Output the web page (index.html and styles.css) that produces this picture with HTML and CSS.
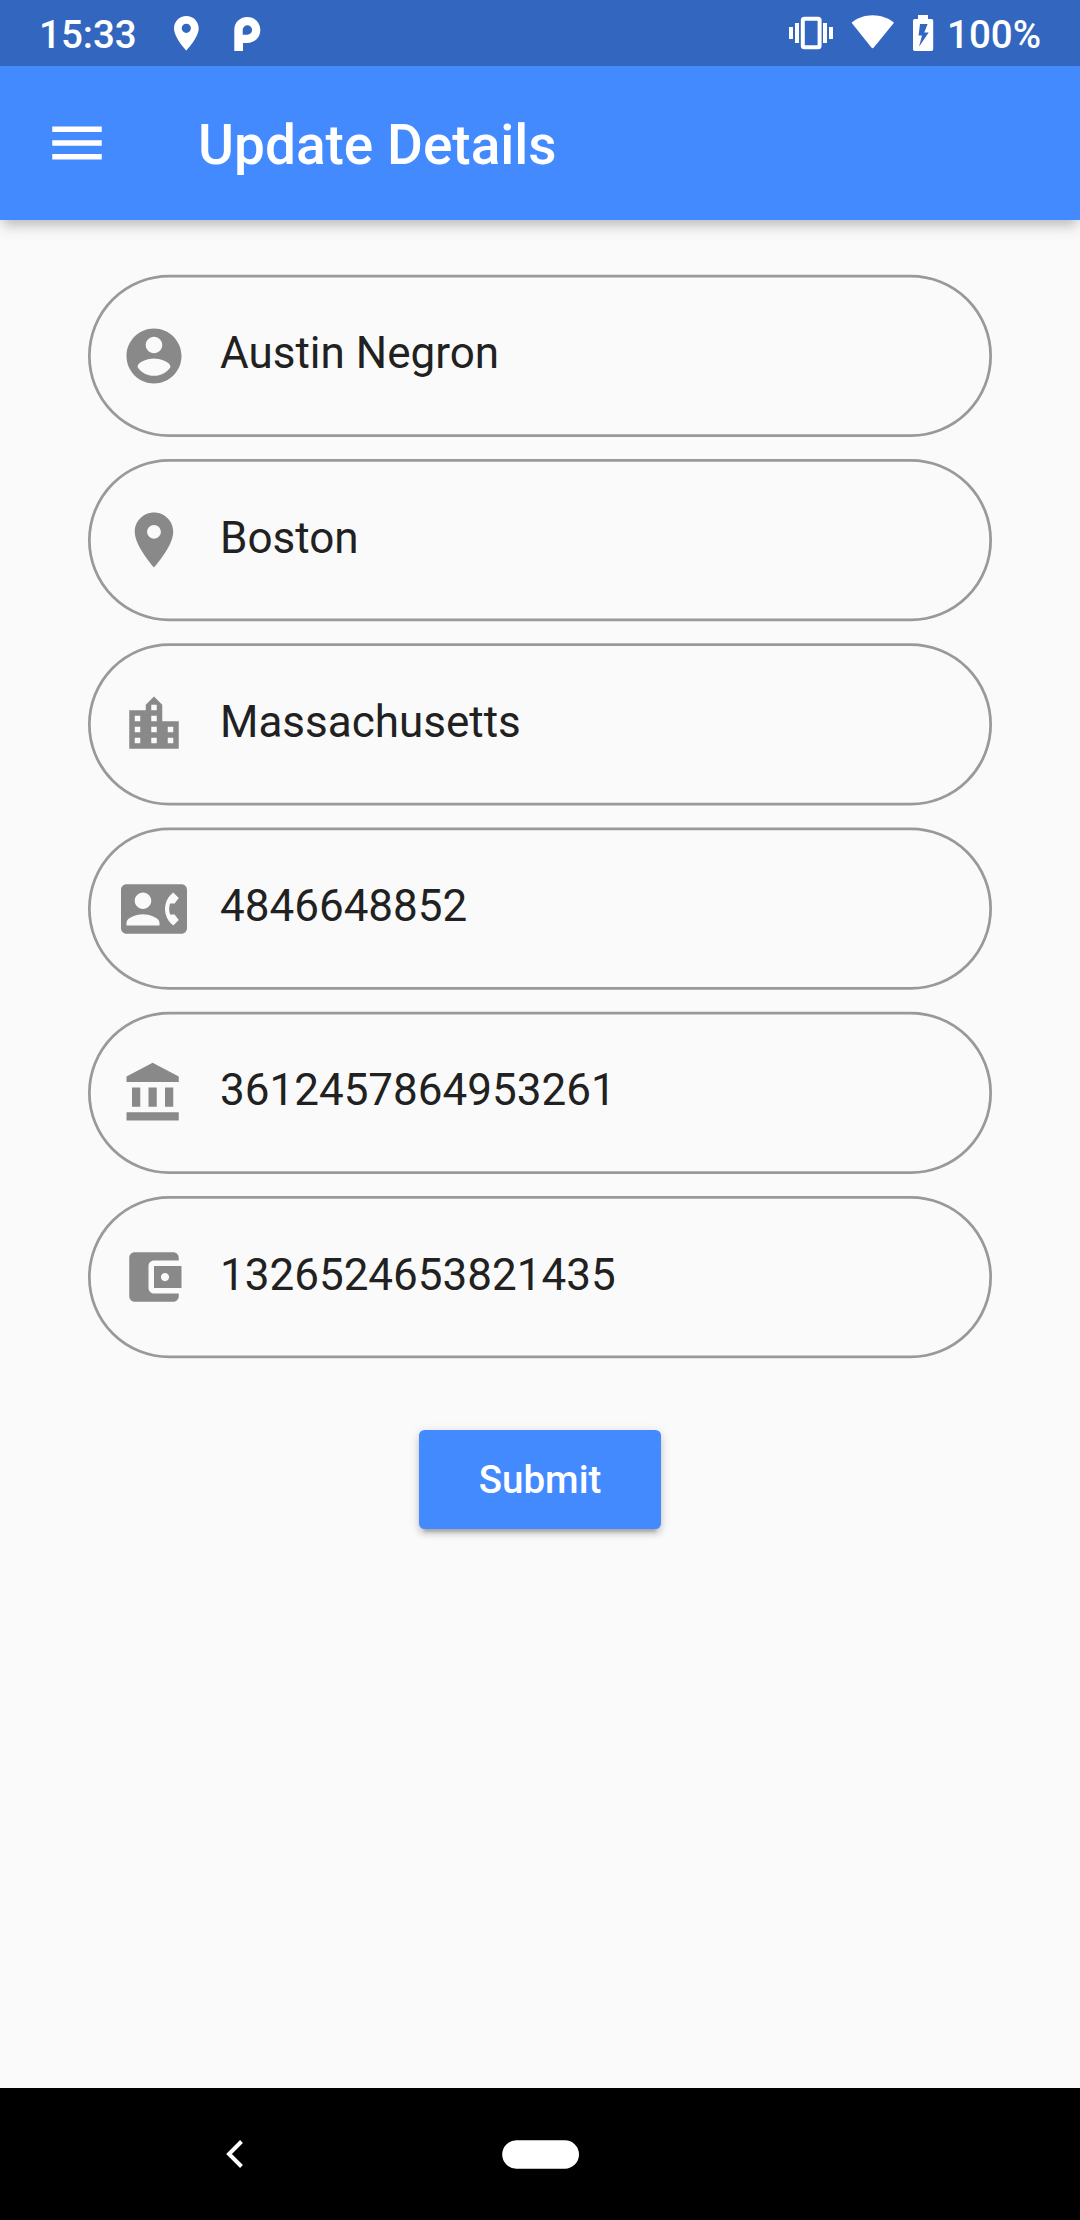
FILE: index.html
```html
<!DOCTYPE html>
<html lang="en">
<head>
<meta charset="utf-8">
<title>Update Details</title>
<link rel="stylesheet" href="styles.css">
</head>
<body>
<div class="screen">
  <header class="top">
    <div class="status">
      <span class="clock">15:33</span>
      <svg class="status-pin" width="26" height="66" viewBox="173 0 26 66"><path fill-rule="evenodd" d="M186.300 16C179.500 16 174 21.500 174 28.200C174 37.500 186.300 50.500 186.300 50.500S198.700 37.500 198.700 28.200C198.700 21.500 193.200 16 186.300 16ZM186.300 23.700a4.600 4.600 0 1 1 0 9.200a4.600 4.600 0 1 1 0-9.200Z"/></svg>
      <svg class="status-p" width="28" height="66" viewBox="233 0 28 66"><path fill-rule="evenodd" d="M234.300 51V30C234.300 22.500 239.700 17 247.200 17C254.800 17 260.300 22.700 260.300 30C260.300 37.500 254.800 43 247.200 43H243V51ZM247.400 25.300a4.700 4.700 0 0 0-4.700 4.700V34.700H247.400a4.700 4.700 0 0 0 0-9.400Z"/></svg>
      <span class="spacer"></span>
      <svg class="status-vibrate" width="46" height="66" viewBox="788 0 46 66"><path d="M789 27h4v12h-4zM795 23h4v20h-4zM823 23h4v20h-4zM829 27h4v12h-4z"/><rect x="802.800" y="18.800" width="16.800" height="28.400" rx="1.500" fill="none" stroke="#fff" stroke-width="4"/></svg>
      <svg class="status-wifi" width="44" height="66" viewBox="851 0 44 66"><path d="M851.600 22.800C857 18 865 15.300 872.600 15.300S888.500 18 894 22.800L874 47.300Q872.600 49 871.200 47.300Z"/></svg>
      <svg class="status-battery" width="22" height="66" viewBox="912 0 22 66"><path fill-rule="evenodd" d="M918 15h10v4h3.500q1.700 0 1.700 1.700V49.300q0 1.700-1.700 1.700H914.700q-1.700 0-1.700-1.700V20.700q0-1.700 1.700-1.700H918ZM920 24L918.600 35.500H922L919 46.800L928.700 32.500H924.300L927.600 24Z"/></svg>
      <span class="level">100%</span>
    </div>
    <div class="appbar">
      <svg class="icon menu" viewBox="0 0 24 24"><path d="M3 18h18v-2H3v2zm0-5h18v-2H3v2zm0-7v2h18V6H3z"/></svg>
      <h1 class="title">Update Details</h1>
    </div>
  </header>

  <main class="content">
    <form class="form">
      <svg class="outlines" width="904" height="1086" viewBox="0 0 904 1086">
        <rect x="1.375" y="2.125" width="901.250" height="159.500" rx="79.750"/>
        <rect x="1.375" y="186.375" width="901.250" height="159.500" rx="79.750"/>
        <rect x="1.375" y="370.625" width="901.250" height="159.500" rx="79.750"/>
        <rect x="1.375" y="554.875" width="901.250" height="159.500" rx="79.750"/>
        <rect x="1.375" y="739.125" width="901.250" height="159.500" rx="79.750"/>
        <rect x="1.375" y="923.375" width="901.250" height="159.500" rx="79.750"/>
      </svg>
      <div class="field">
        <svg class="icon" viewBox="0 0 24 24"><path d="M12 2C6.480 2 2 6.480 2 12s4.480 10 10 10 10-4.480 10-10S17.520 2 12 2zm0 3c1.660 0 3 1.340 3 3s-1.340 3-3 3-3-1.340-3-3 1.340-3 3-3zm0 14.200c-2.500 0-4.710-1.280-6-3.220.03-1.990 4-3.080 6-3.080 1.990 0 5.970 1.090 6 3.080-1.290 1.940-3.500 3.220-6 3.220z"/></svg>
        <span class="value">Austin Negron</span>
      </div>
      <div class="field">
        <svg class="icon" viewBox="0 0 24 24"><path d="M12 2C8.130 2 5 5.130 5 9c0 5.250 7 13 7 13s7-7.750 7-13c0-3.870-3.130-7-7-7zm0 9.500c-1.380 0-2.500-1.120-2.500-2.500s1.120-2.500 2.500-2.500 2.500 1.120 2.500 2.500-1.120 2.500-2.500 2.500z"/></svg>
        <span class="value">Boston</span>
      </div>
      <div class="field">
        <svg class="icon" viewBox="0 0 24 24"><path d="M15 11V5l-3-3-3 3v2H3v14h18V11h-6zm-8 8H5v-2h2v2zm0-4H5v-2h2v2zm0-4H5V9h2v2zm6 8h-2v-2h2v2zm0-4h-2v-2h2v2zm0-4h-2V9h2v2zm0-4h-2V5h2v2zm6 12h-2v-2h2v2zm0-4h-2v-2h2v2z"/></svg>
        <span class="value">Massachusetts</span>
      </div>
      <div class="field">
        <svg class="icon" viewBox="0 0 24 24"><path d="M22 3H2C.9 3 0 3.900 0 5v14c0 1.100.9 2 2 2h20c1.100 0 1.990-.9 1.990-2L24 5c0-1.100-.9-2-2-2zM8 6c1.660 0 3 1.340 3 3s-1.340 3-3 3-3-1.340-3-3 1.340-3 3-3zm6 12H2v-1c0-2 4-3.100 6-3.100s6 1.100 6 3.100v1zm3.850-4h1.640L21 16l-1.990 1.990c-1.310-.98-2.280-2.380-2.730-3.990-.18-.64-.28-1.310-.28-2s.1-1.360.28-2c.45-1.620 1.420-3.010 2.730-3.990L21 8l-1.510 2h-1.640c-.22.63-.35 1.300-.35 2s.13 1.370.35 2z"/></svg>
        <span class="value">4846648852</span>
      </div>
      <div class="field">
        <svg class="icon" viewBox="0 0 24 24"><path d="M4 10v7h3v-7H4zm6 0v7h3v-7h-3zM2 22h19v-3H2v3zm14-12v7h3v-7h-3zm-4.500-9L2 6v2h19V6l-9.500-5z"/></svg>
        <span class="value">3612457864953261</span>
      </div>
      <div class="field">
        <svg class="icon" viewBox="0 0 24 24"><path d="M21 18v1c0 1.100-.9 2-2 2H5c-1.110 0-2-.9-2-2V5c0-1.100.89-2 2-2h14c1.100 0 2 .9 2 2v1h-9c-1.110 0-2 .9-2 2v8c0 1.100.89 2 2 2h9zm-9-2h10V8H12v8zm4-2.500c-.83 0-1.500-.67-1.500-1.500s.67-1.500 1.500-1.500 1.500.67 1.500 1.500-.67 1.500-1.500 1.500z"/></svg>
        <span class="value">1326524653821435</span>
      </div>
    </form>
    <button class="submit" type="button">Submit</button>
  </main>

  <nav class="navbar">
    <svg class="back" width="18" height="28" viewBox="0 0 18 28"><path d="M15.500 1.500L3 14L15.500 26.500" fill="none" stroke="#fff" stroke-width="4"/></svg>
    <svg class="home" width="78" height="30" viewBox="0 0 78 30"><rect x="0.200" y="0.300" width="76.800" height="28.400" rx="14.200" fill="#fff"/></svg>
  </nav>
</div>
</body>
</html>
```
FILE: styles.css
```css
* {
  box-sizing: border-box;
}

body {
  margin: 0;
  font-family: Roboto, "Noto Sans", sans-serif;
  background: #fafafa;
}

.screen {
  display: flex;
  flex-direction: column;
  width: 1080px;
  height: 2220px;
}

.top {
  height: 220px;
  background: #448aff;
  color: #fff;
  box-shadow: 0 5.5px 11px -2.75px rgba(0, 0, 0, 0.2), 0 11px 14px rgba(0, 0, 0, 0.05), 0 2.75px 20px rgba(0, 0, 0, 0.06);
}

.status {
  display: flex;
  height: 66px;
  padding: 0 40px 0 39px;
  background: #3367bf;
  fill: #fff;
  font-size: 38.5px;
  font-weight: 500;
  line-height: 69px;
}

.clock {
  width: 134px;
}

.status-p {
  margin-left: 34px;
}

.spacer {
  flex: 1;
}

.status-wifi {
  margin-left: 17px;
}

.status-battery {
  margin-left: 17px;
}

.level {
  width: 93px;
  margin-left: 13px;
}

.appbar {
  display: flex;
  align-items: center;
  height: 154px;
  padding-left: 44px;
}

.icon {
  width: 66px;
  height: 66px;
  fill: #898989;
}

.menu {
  fill: #fff;
}

.title {
  margin: 3px 0 0 88px;
  font-size: 55px;
  font-weight: 500;
  line-height: 64px;
}

.content {
  flex: 1;
  display: flex;
  flex-direction: column;
  align-items: center;
  padding-top: 54px;
}

.form {
  position: relative;
  display: flex;
  flex-direction: column;
  gap: 22px;
  width: 904px;
  height: 1156px;
  padding-top: 0.75px;
}

.outlines {
  position: absolute;
  top: 0;
  left: 0;
  fill: none;
  stroke: #999;
  stroke-width: 2.75px;
}

.field {
  display: flex;
  align-items: center;
  height: 162.25px;
  padding-left: 33px;
}

.value {
  margin: -5px 0 0 33px;
  color: #212121;
  font-size: 44px;
  line-height: 52px;
}

.submit {
  width: 242px;
  height: 99px;
  padding: 0;
  border: 0;
  border-radius: 5.5px;
  background: #448aff;
  color: #fff;
  font: 500 38.5px/45px Roboto, "Noto Sans", sans-serif;
  box-shadow: 0 8px 3px -5px rgba(0, 0, 0, 0.16), 0 5px 6px rgba(0, 0, 0, 0.14), 0 2px 12px rgba(0, 0, 0, 0.12);
}

.navbar {
  display: flex;
  align-items: center;
  height: 132px;
  padding-left: 226px;
  background: #000;
}

.home {
  margin: 2px 0 0 258px;
}
```
